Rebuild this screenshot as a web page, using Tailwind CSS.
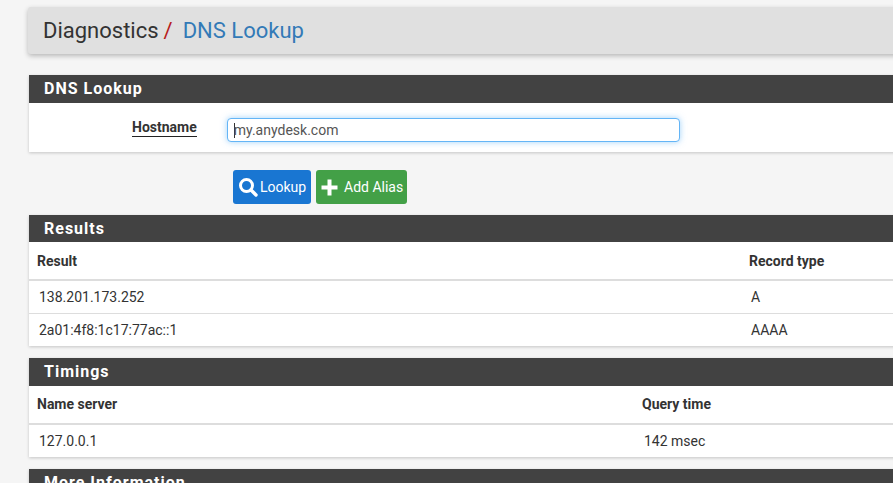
<!DOCTYPE html>
<html lang="en">
<head>
    <meta charset="UTF-8">
    <meta name="viewport" content="width=device-width, initial-scale=1.0">
    <title>Diagnostics: DNS Lookup</title>
    <script src="https://cdn.jsdelivr.net/npm/@tailwindcss/browser@4"></script>
</head>
<body class="h-[483px] overflow-hidden bg-[#f5f5f5] font-['Roboto',sans-serif] text-[14px] text-[#333]">
    <div class="w-[900px] pl-[29px] pt-[7px]">
        <!-- breadcrumb -->
        <div class="-ml-px flex h-[47px] items-center rounded-[3px] bg-[#e0e0e0] pl-[15px] text-[22px] shadow-[0_2px_5px_rgba(0,0,0,0.25)]">
            <span class="text-[#333]">Diagnostics</span>
            <span class="ml-[5px] text-[#b71c1c]">/</span>
            <span class="ml-[10px] text-[#337ab7]">DNS Lookup</span>
        </div>

        <!-- form panel -->
        <div class="mt-[21px] bg-white shadow-[0_1px_3px_rgba(0,0,0,0.2)]">
            <h2 class="flex h-[28px] items-center bg-[#424242] pl-[15px] text-[16px] font-bold tracking-[1px] text-white">DNS Lookup</h2>
            <div class="flex h-[49px] items-start">
                <label class="mt-[16px] ml-[103px] border-b border-[#222] text-[14px] leading-[17px] font-bold text-[#333]">Hostname</label>
                <div class="mt-[15px] ml-[30px] flex h-[24px] w-[453px] items-center rounded-[4px] border border-[#64b5f6] bg-white pl-[6px] text-[14px] text-[#555] shadow-[0_0_6px_rgba(100,181,246,0.6)]">
                    <span class="-mr-px h-[15px] w-px bg-[#333]"></span><span>my.anydesk.com</span>
                </div>
            </div>
        </div>

        <!-- buttons -->
        <div class="mt-[18px] ml-[204px] flex gap-[5px] text-[14px] text-white">
            <button class="flex h-[34px] w-[78px] items-center gap-[2px] rounded-[3px] bg-[#1976d2] pl-[5px]">
                <svg width="20" height="20" viewBox="0 0 20 20" fill="none" stroke="white"><circle cx="8.5" cy="8.5" r="6" stroke-width="3"/><path d="M13 13l5 5" stroke-width="3.4" stroke-linecap="round"/></svg>
                <span>Lookup</span>
            </button>
            <button class="flex h-[34px] w-[91px] items-center gap-[6px] rounded-[3px] bg-[#43a047] pl-[5px]">
                <svg width="17" height="17" viewBox="0 0 17 17" fill="white"><path d="M6.5 0.5h4v6h6v4h-6v6h-4v-6h-6v-4h6z"/></svg>
                <span>Add Alias</span>
            </button>
        </div>

        <!-- results -->
        <div class="mt-[11px] bg-white shadow-[0_1px_3px_rgba(0,0,0,0.2)]">
            <h2 class="flex h-[27px] items-center bg-[#424242] pl-[15px] text-[16px] font-bold tracking-[1px] text-white">Results</h2>
            <div class="flex h-[39px] items-center border-b-2 border-[#ddd] pt-[2px] pl-[8px] text-[14px] font-bold">
                <span class="w-[712px]">Result</span><span>Record type</span>
            </div>
            <div class="flex h-[33px] items-center border-b border-[#ddd] pl-[10px] text-[14px]">
                <span class="w-[712px]">138.201.173.252</span><span>A</span>
            </div>
            <div class="flex h-[32px] items-center pl-[10px] text-[14px]">
                <span class="w-[712px]">2a01:4f8:1c17:77ac::1</span><span>AAAA</span>
            </div>
        </div>

        <!-- timings -->
        <div class="mt-[12px] bg-white shadow-[0_1px_3px_rgba(0,0,0,0.2)]">
            <h2 class="flex h-[28px] items-center bg-[#424242] pl-[15px] text-[16px] font-bold tracking-[1px] text-white">Timings</h2>
            <div class="mt-px flex h-[38px] items-center border-b-2 border-[#ddd] pb-[2px] pl-[8px] text-[14px] font-bold">
                <span class="w-[605px]">Name server</span><span>Query time</span>
            </div>
            <div class="flex h-[32px] items-center pl-[10px] text-[14px]">
                <span class="w-[605px]">127.0.0.1</span><span>142 msec</span>
            </div>
        </div>

        <!-- more info, cut off by the window -->
        <div class="mt-[12px] bg-white shadow-[0_1px_3px_rgba(0,0,0,0.2)]">
            <h2 class="flex h-[28px] items-center bg-[#424242] pl-[15px] text-[16px] font-bold tracking-[1px] text-white">More Information</h2>
        </div>
    </div>
</body>
</html>
